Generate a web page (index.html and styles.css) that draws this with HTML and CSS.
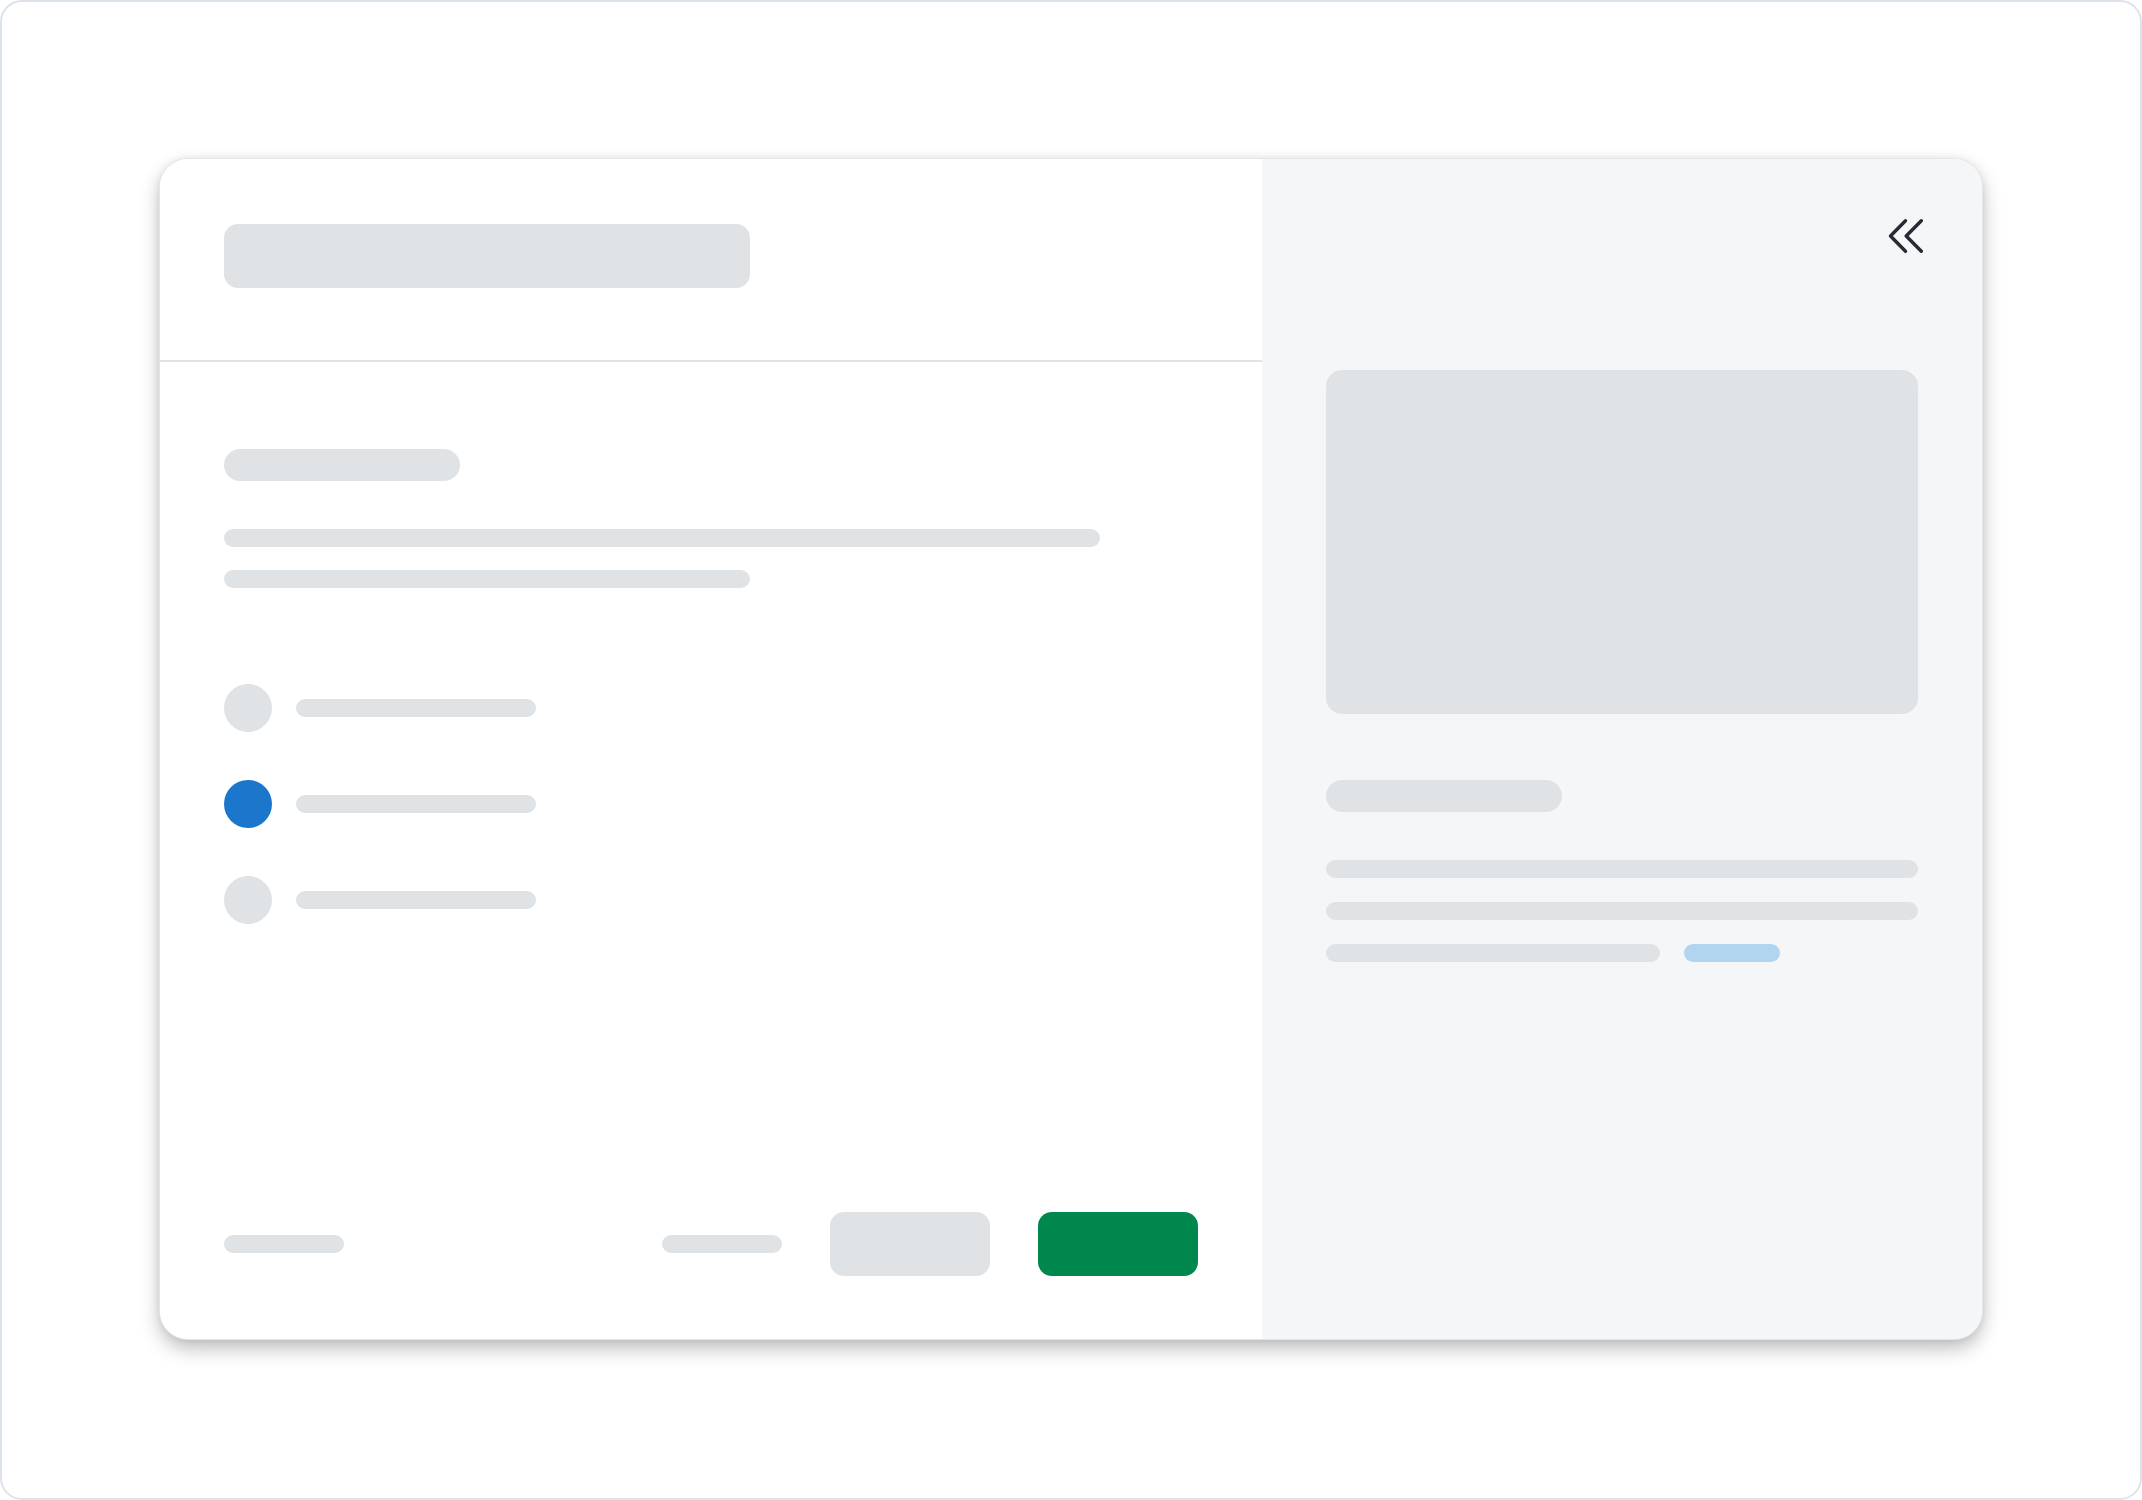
FILE: index.html
```html
<!DOCTYPE html>
<html lang="en">
<head>
<meta charset="utf-8">
<title>Dialog skeleton</title>
<link rel="stylesheet" href="styles.css">
</head>
<body>
<div class="frame">
  <div class="card">
    <section class="main">
      <header class="main-header">
        <div class="sk title"></div>
      </header>
      <div class="main-body">
        <div class="sk pill"></div>
        <div class="sk line line-long"></div>
        <div class="sk line line-mid"></div>
        <ul class="options">
          <li class="option"><span class="radio"></span><span class="sk line opt-line"></span></li>
          <li class="option"><span class="radio radio-on"></span><span class="sk line opt-line"></span></li>
          <li class="option"><span class="radio"></span><span class="sk line opt-line"></span></li>
        </ul>
      </div>
      <footer class="main-footer">
        <div class="sk line foot-line"></div>
        <div class="spacer"></div>
        <div class="sk line foot-line"></div>
        <div class="btn btn-gray"></div>
        <div class="btn btn-green"></div>
      </footer>
    </section>
    <aside class="side">
      <div class="side-top">
        <svg class="collapse" width="40" height="40" viewBox="0 0 40 40" fill="none" stroke="#262b33" stroke-width="3.4" stroke-linecap="round" stroke-linejoin="round">
          <path d="M22.5 4.8 L7.5 20 L22.5 35.2"/>
          <path d="M38.3 4.8 L23.2 20 L38.3 35.2"/>
        </svg>
      </div>
      <div class="sk media"></div>
      <div class="sk pill side-pill"></div>
      <div class="sk line full"></div>
      <div class="sk line full"></div>
      <div class="last-row">
        <div class="sk line last-gray"></div>
        <div class="sk line link"></div>
      </div>
    </aside>
  </div>
</div>
</body>
</html>
```

FILE: styles.css
```css
* { box-sizing: border-box; }
html, body { margin: 0; padding: 0; background: #ffffff; font-family: "Roboto", "Liberation Sans", sans-serif; }

.frame {
  width: 2142px;
  height: 1500px;
  border: 2px solid #dce3eb;
  border-radius: 22px;
  background: #ffffff;
  display: flex;
  align-items: center;
  justify-content: center;
  padding-bottom: 2px;
}

.card {
  width: 1822px;
  height: 1180px;
  display: flex;
  border-radius: 28px;
  overflow: hidden;
  background: #ffffff;
  box-shadow: 0 0 0 1px #e4e6e9, 0 9px 20px rgba(0, 0, 0, 0.27), 0 0 8px rgba(0, 0, 0, 0.08);
}

.sk { background: #e0e3e6; }
.line { height: 18px; border-radius: 9px; }

.main {
  width: 1102px;
  flex: none;
  display: flex;
  flex-direction: column;
  background: #ffffff;
}

.main-header {
  padding: 65px 64px 0;
  height: 203px;
  border-bottom: 2px solid #dfe2e6;
}
.title { width: 526px; height: 64px; border-radius: 14px; }

.main-body {
  flex: 1;
  padding: 87px 64px 0;
  display: flex;
  flex-direction: column;
}
.pill { width: 236px; height: 32px; border-radius: 16px; }
.line-long { width: 876px; margin-top: 48px; }
.line-mid { width: 526px; margin-top: 23px; }

.options {
  list-style: none;
  margin: 96px 0 0;
  padding: 0;
  display: flex;
  flex-direction: column;
  gap: 48px;
}
.option { display: flex; align-items: center; gap: 24px; }
.radio { width: 48px; height: 48px; border-radius: 50%; background: #e0e3e6; flex: none; }
.radio-on { background: #1b77cb; }
.opt-line { width: 240px; display: block; }

.main-footer {
  padding: 0 64px 63px;
  display: flex;
  align-items: center;
  gap: 48px;
}
.foot-line { width: 120px; }
.spacer { flex: 1; }
.btn { width: 160px; height: 64px; border-radius: 14px; }
.btn-gray { background: #e0e3e6; }
.btn-green { background: #00874d; }

.side {
  flex: 1;
  background: #f5f6f8;
  padding: 57px 64px 64px;
  display: flex;
  flex-direction: column;
}
.side-top { display: flex; justify-content: flex-end; height: 40px; margin-right: -5px; }
.collapse { display: block; }
.media { margin-top: 114px; height: 344px; border-radius: 16px; }
.side-pill { margin-top: 66px; width: 236px; }
.full { margin-top: 48px; }
.full + .full { margin-top: 24px; }
.last-row { margin-top: 24px; display: flex; gap: 24px; }
.last-gray { width: 334px; }
.link { width: 96px; background: #b2d5ef; }
```
